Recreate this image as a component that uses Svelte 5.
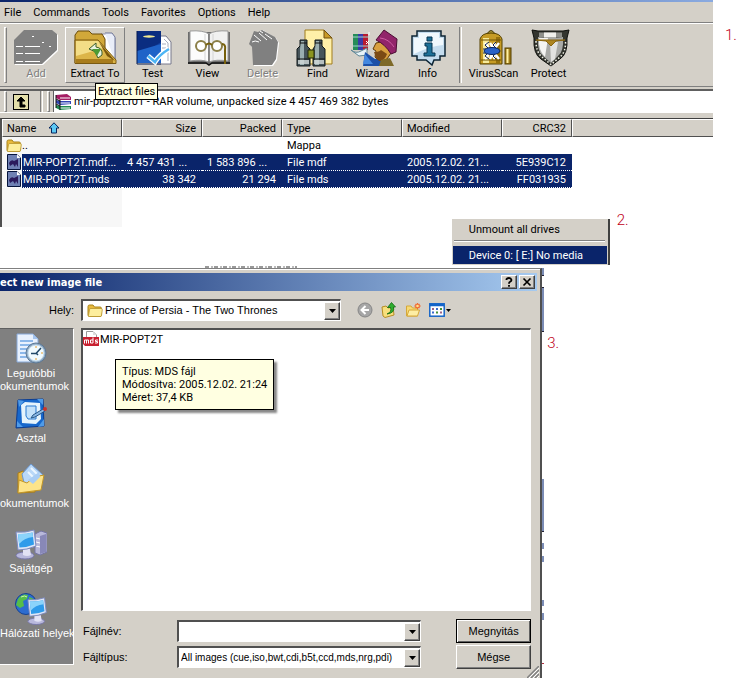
<script>
  const menus = ['File', 'Commands', 'Tools', 'Favorites', 'Options', 'Help'];

  const tools = [
    { id: 'add', label: 'Add', disabled: true },
    { id: 'extract', label: 'Extract To', hot: true },
    { id: 'test', label: 'Test' },
    { id: 'view', label: 'View' },
    { id: 'delete', label: 'Delete', disabled: true },
    { id: 'find', label: 'Find' },
    { id: 'wizard', label: 'Wizard' },
    { id: 'info', label: 'Info' },
    { id: 'virus', label: 'VirusScan', split: true },
    { id: 'protect', label: 'Protect' }
  ];

  const files = [
    { name: 'MIR-POPT2T.mdf...', size: '4 457 431 ...', packed: '1 583 896 ...', type: 'File mdf', modified: '2005.12.02. 21...', crc: '5E939C12' },
    { name: 'MIR-POPT2T.mds', size: '38 342', packed: '21 294', type: 'File mds', modified: '2005.12.02. 21...', crc: 'FF031935' }
  ];

  const places = [
    { id: 'recent', lines: ['Legutóbbi', 'okumentumok'] },
    { id: 'desktop', lines: ['Asztal'] },
    { id: 'documents', lines: ['okumentumok'] },
    { id: 'computer', lines: ['Sajátgép'] },
    { id: 'network', lines: ['Hálózati helyek'] }
  ];

  let archivePath = $state('mir-popt2t.r01 - RAR volume, unpacked size 4 457 469 382 bytes');
  let fileName = $state('');

  // Truncated numbers start at the left edge of their cell
  const truncated = (text) => text.endsWith('...');
</script>

{#snippet folderIcon()}
  <svg class="small-icon" viewBox="0 0 16 16" aria-hidden="true">
    <path d="M1 3.5Q1 2 2.500 2H6l1.500 2H13q1.500 0 1.500 1.500V12q0 1.500-1.500 1.500H2.500Q1 13.500 1 12z" fill="#e8b93c" stroke="#a8841c" />
    <path d="M2.500 6.500Q2.700 5.500 4 5.500H14q1.500 0 1.300 1.200L14.500 12.500q-.2 1-1.500 1H2.500q-1 0-1-1z" fill="#fdee9c" stroke="#b8942c" stroke-width=".8" />
  </svg>
{/snippet}

{#snippet arrow()}
  <svg class="arrow" viewBox="0 0 7 4" aria-hidden="true"><path d="M0 0H7L3.500 4z" /></svg>
{/snippet}

{#snippet monitor()}
  <ellipse cx="10" cy="27.500" rx="9" ry="3.500" fill="#b9b9dc" stroke="#7777aa" />
  <path d="M8 21h7l1 6q-4 2-8 0z" fill="#e2e2f4" />
  <path d="M1 4Q10 5 19 2L21 18Q12 22 3 22z" fill="#dfe6f6" stroke="#7d8ac0" />
  <path d="M3 6Q10 6.500 17.500 4.500L19 16.500Q12 19.500 4.500 19.500z" fill="#2f9bea" />
  <path d="M3 6Q10 6.500 17.500 4.500L18 9Q9 10 4 16z" fill="#8bd3fb" />
{/snippet}

<main>
  <section class="step">
    <div class="archiver">
      <nav class="menubar">
        {#each menus as menu}
          <button>{menu}</button>
        {/each}
      </nav>

      <div class="toolbar">
        <span class="grip"></span>
        {#each tools as tool}
          {#if tool.split}<span class="split"></span>{/if}
          <button class="tool" class:hot={tool.hot} disabled={tool.disabled}>
            <svg viewBox="0 0 44 36" aria-hidden="true">
              {#if tool.id === 'add'}
                <path d="M11 1H39L44 5V21L29 35H1V11z" fill="#fff" />
                <path d="M10 0H38L43 4V20L28 34H0V10z" fill="#808080" />
                <path d="M2 16.500h7M11 16.500h15M2 23.500h7M11 23.500h15M2 31.500h7M11 31.500h15M18 6.500h2M28 12.500h2M35 16.500h2" stroke="#fff" fill="none" />
              {:else if tool.id === 'extract'}
                <path d="M28 4H38L42 8V32H28z" fill="#fff" stroke="#8d8fa8" />
                <path d="M32 3h7l3 4v25" fill="#e9edf8" stroke="#6f7698" />
                <path d="M2 5L5 1H16L19 4H29L32 9V33H2z" fill="#d1a83a" stroke="#6a4c0c" />
                <path d="M2 10H25L43 30V33.500H2z" fill="#dcb548" stroke="#7a5a12" />
                <path d="M3 11H25L31 18L3 26z" fill="#f3dd86" />
                <path d="M3 29H40V33H3z" fill="#a87c1c" />
                <path d="M26 12L42 31L34 26z" fill="#7c580c" />
                <path d="M16 19L23 13V17Q30 18 29 25L25 28L22 22H23z" fill="#e9f4e0" stroke="#3c5c28" />
                <path d="M19 19H28L24 26z" fill="#4c9c34" />
              {:else if tool.id === 'test'}
                <path d="M28 6H35L40 12V34H26z" fill="#fff" stroke="#77788c" />
                <path d="M33 9l4 4v18M31 14h4M31 18h4" stroke="#a7adbe" fill="none" />
                <rect x="6" y="1" width="24" height="32" fill="#123f9c" />
                <path d="M6 1H30V12L6 27z" fill="#0a2d80" />
                <path d="M6 33V21L30 14V33z" fill="#1f63c8" />
                <path d="M6 1V34H30" stroke="#061a50" fill="none" />
                <ellipse cx="18" cy="6.500" rx="6" ry="1.200" fill="#f0e890" />
                <path d="M17 26L24 32Q28 25 38 19" stroke="#fff" stroke-width="5" fill="none" />
                <path d="M17 26L24 32Q28 25 38 19" stroke="#4cb4f4" stroke-width="2.500" fill="none" />
              {:else if tool.id === 'view'}
                <path d="M2 2V34H44V2" fill="#6d6d6d" />
                <path d="M4 1Q17 0 23 4V32Q16 29 4 31z" fill="#fcfcfc" stroke="#999" />
                <path d="M42 1Q29 0 23 4V32Q30 29 42 31z" fill="#f1f1f1" stroke="#999" />
                <path d="M23 4V33" stroke="#555" />
                <path d="M19 4v26M27 4v26" stroke="#d4d4d4" />
                <path d="M2 33H20L23 35L26 33H44" stroke="#111" stroke-width="1.500" fill="none" />
                <circle cx="15" cy="16" r="5" fill="#fff" stroke="#8b7f48" stroke-width="2" />
                <circle cx="31" cy="16" r="5" fill="#fff" stroke="#8b7f48" stroke-width="2" />
                <path d="M20 15Q23 12 26 15M36 14Q40 14 39 20V34" stroke="#77600c" stroke-width="2" fill="none" />
              {:else if tool.id === 'delete'}
                <path d="M14 2L18 3L22 0L35 8L38 13L36 30L32 36H13L12 18L9 15z" fill="#fff" />
                <path d="M13 1L17 2L21 0L34 7L37 12L35 29L31 35H12L11 17L8 14z" fill="#808080" />
                <path d="M13 5L20 11M18 3L26 10M24 4L31 9M11 12Q14 10 18 12M19 1l3 2" stroke="#fff" fill="none" />
              {:else if tool.id === 'find'}
                <path d="M9 0H28L36 8V34H9z" fill="#fff0a8" stroke="#a07c1c" />
                <path d="M28 0V8H36z" fill="#c89a28" stroke="#705010" />
                <path d="M4 10h7v6l3 3v17H1V19l3-3zM19 10h7v6l3 3v17H17V19l2-3z" fill="#46545a" stroke="#11181b" />
                <path d="M5 11h3v24H4V19zM20 11h3v24h-4V19z" fill="#9aaeb0" />
                <path d="M4 13h7M19 13h7M1 29h13M17 29h12" stroke="#111" />
                <path d="M2 30h11v4H2zM18 30h10v4H18z" fill="#d2d9d9" opacity=".8" />
                <path d="M12 20h6v8h-6z" fill="#8a9420" stroke="#232806" />
              {:else if tool.id === 'wizard'}
                <rect x="2" y="4" width="5" height="16" fill="#268c58" />
                <rect x="7" y="4" width="5" height="16" fill="#3a3aa8" />
                <rect x="12" y="4" width="5" height="16" fill="#b81c30" />
                <path d="M2 7h15M2 16h15" stroke="#9fd3d0" />
                <path d="M0 20Q5 24 10 21L16 18V25L8 26z" fill="#e8f4f8" stroke="#5c8494" />
                <path d="M14 22L24 29L31 27L41 32V36H12z" fill="#1c50a8" />
                <path d="M14 24L22 34H12z" fill="#4488e0" />
                <path d="M25 13L22 19L25 21L24 27Q29 33 36 29L42 20L35 11z" fill="#d8a040" stroke="#5d3808" />
                <path d="M23 22Q28 22 30 20L36 24Q34 30 29 31Q25 29 24 25z" fill="#7b4a14" />
                <path d="M25 10L33 0L46 9L45 22L40 24Q34 14 25 10z" fill="#92246a" stroke="#4b0d34" />
                <path d="M29 8Q38 9 43 17" stroke="#cc5ca2" fill="none" />
                <path d="M30 30L39 28L43 36H28z" fill="#7e6a28" />
                <path d="M15 11l3 3M18 11l-3 3M18 2v3" stroke="#fff" />
              {:else if tool.id === 'info'}
                <path d="M11 1H35V6H39V26H34V30H28L26 35L20 30H11V26H6V6H11z" fill="#c4dcee" stroke="#0c2434" stroke-width="1.500" />
                <path d="M13 3H33V8H37V15Q24 16 8 24V8H13z" fill="#f0f8fd" />
                <path d="M21 7h5v4h-5zM19 13h7v10h3v3H18v-3h3v-7h-2z" fill="#1c7098" stroke="#063450" />
              {:else if tool.id === 'virus'}
                <path d="M15 4Q19-3 23 4z" fill="#b5a03b" stroke="#403400" />
                <path d="M8 34V9Q10 3 19 3T30 9V34z" fill="#c69b24" stroke="#544000" />
                <path d="M11 8h6v25h-6z" fill="#f7eb9a" />
                <path d="M24 7h4v26h-4z" fill="#95700b" />
                <path d="M9 30h20M9 10h20" stroke="#6c5104" />
                <path d="M13 13l4 5M18 13l3 5M23 13l-3 5M27 13l-4 5M13 29l4-5M18 29l2-5M23 29l-3-5M27 29l-4-5" fill="none" stroke="#fff" stroke-width="2.500" />
                <path d="M17 12l-4 3 4 4M24 12l-3 3 4 4M17 29l-4-3 4-4M24 29l-3-3 4-4M11 19h3M11 23h3" fill="none" stroke="#102458" />
                <ellipse cx="20" cy="21" rx="8" ry="3.500" fill="#2a62c8" stroke="#0b245c" />
                <rect x="33" y="18" width="6" height="16" fill="#a07c1a" stroke="#544000" />
                <path d="M35.500 19v14" stroke="#fff1a2" stroke-width="2" />
              {:else}
                <path d="M5 0L11 1H36L42 0L40 8Q41 24 33 29L24 36L14 29Q6 24 7 8z" fill="#33352f" stroke="#0f100d" />
                <path d="M11 7Q24 9 36 7Q37 22 31 26L24 33L16 26Q10 22 11 7z" fill="#a9aaa7" />
                <path d="M12 8H21L18 27Q11 20 12 9z" fill="#f4f4f2" />
                <path d="M23 12H31L28 29L24 32z" fill="#e2e2e0" />
                <path d="M9 10H38L29 11L24 16L19 11z" fill="#ad8520" stroke="#8a6610" />
                <path d="M12 2.500h23v5H12z" fill="#8e8f8a" />
                <path d="M17 2.500h12v5H17z" fill="#f0f0ec" />
                <path d="M9 11Q9 22 15 27L24 34.500L33 27Q39 22 38.500 11" fill="none" stroke="#f4f4e8" stroke-dasharray="1.500 2" stroke-width="1.500" />
              {/if}
            </svg>
            <span>{tool.label}</span>
            {#if tool.hot}<span class="tip" role="tooltip">Extract files</span>{/if}
          </button>
        {/each}
      </div>

      <div class="address">
        <span class="grip"></span>
        <button class="up" aria-label="Up one level">
          <svg viewBox="0 0 16 16" aria-hidden="true">
            <rect x=".5" y=".5" width="15" height="15" fill="#e4dfaa" stroke="#000" />
            <path d="M8 3L12 7H9V11H12V13H7V7H4z" stroke="#000" />
          </svg>
        </button>
        <span class="split"></span>
        <span class="grip"></span>
        <label class="path">
          <svg class="small-icon" viewBox="0 0 16 16" aria-hidden="true">
            <path d="M1 1L12 0L16 3V6L5 6L1 4z" fill="#a51d64" />
            <path d="M1 6L5 7H16V10L5 11L1 9z" fill="#3144b4" />
            <path d="M1 11L5 12H16V15L5 16L1 14z" fill="#1e8a50" />
            <path d="M5 4H15M5 9H15M5 14H15" stroke="#fff" />
            <path d="M1 1V14M1 5L5 7M1 10L5 12M5 6V16" stroke="#111" fill="none" />
          </svg>
          <input type="text" aria-label="Archive" bind:value={archivePath} />
        </label>
      </div>

      <div class="listing">
        <table>
          <colgroup>
            <col class="c-name" /><col class="c-size" /><col class="c-size" /><col class="c-type" /><col class="c-mod" /><col class="c-crc" /><col />
          </colgroup>
          <thead>
            <tr>
              <th>
                <span class="sorted">
                  Name
                  <svg viewBox="0 0 12 12" aria-hidden="true"><path d="M6 .8L11 6H8.500V11H3.500V6H1z" fill="#5cc8f4" stroke="#06245c" /></svg>
                </span>
              </th>
              <th class="num">Size</th>
              <th class="num">Packed</th>
              <th>Type</th>
              <th>Modified</th>
              <th class="num">CRC32</th>
              <th></th>
            </tr>
          </thead>
          <tbody>
            <tr>
              <td class="name"><span class="entry">{@render folderIcon()}<span>..</span></span></td>
              <td></td>
              <td></td>
              <td>Mappa</td>
              <td></td>
              <td></td>
              <td></td>
            </tr>
            {#each files as file}
              <tr class="selected">
                <td class="name">
                  <span class="entry">
                    <svg class="small-icon" viewBox="0 0 16 16" aria-hidden="true">
                      <path d="M1.500 .5H11L14.500 4V15.500H1.500z" fill="#6f81b4" stroke="#06143c" />
                      <path d="M11 .5V4H14.500z" fill="#fff" />
                      <path d="M3 9Q5 5 8 7L12 5V13L10 10L9 13L7 10L4 12z" fill="#2a1a5c" />
                    </svg>
                    <span>{file.name}</span>
                  </span>
                </td>
                <td class:num={!truncated(file.size)}>{file.size}</td>
                <td class:num={!truncated(file.packed)}>{file.packed}</td>
                <td>{file.type}</td>
                <td>{file.modified}</td>
                <td class="num">{file.crc}</td>
                <td class="rest"></td>
              </tr>
            {/each}
          </tbody>
        </table>
        <div class="name-column"></div>
      </div>
    </div>
    <span class="note first">1.</span>
  </section>

  <section class="step tray">
    <div class="context">
      <button>Unmount all drives</button>
      <hr />
      <button class="active">Device 0: [ E:] No media</button>
    </div>
    <span class="note">2.</span>
  </section>

  <div class="remnant"></div>

  <section class="step">
    <div class="dialog">
      <header>
        <h1>ect new image file</h1>
        <button class="caption" aria-label="Help">
          <svg viewBox="0 0 10 10" aria-hidden="true"><path d="M2.500 3V2.200Q3 1 5 1T7.500 3Q7.500 4 6 4.800Q5 5.300 5 6.800M5 8v1.800" fill="none" stroke="#000" stroke-width="1.800" /></svg>
        </button>
        <button class="caption" aria-label="Close">
          <svg viewBox="0 0 10 10" aria-hidden="true"><path d="M1.500 1.500L8.500 8.500M8.500 1.500L1.500 8.500" stroke="#000" stroke-width="1.700" /></svg>
        </button>
      </header>

      <div class="lookin">
        <label for="folder">Hely:</label>
        <div class="combo">
          {@render folderIcon()}
          <select id="folder">
            <option>Prince of Persia - The Two Thrones</option>
          </select>
          <span class="drop">{@render arrow()}</span>
        </div>
        <div class="nav">
          <button aria-label="Back">
            <svg viewBox="0 0 16 16" aria-hidden="true">
              <circle cx="8" cy="8" r="7" fill="#a6a6a6" stroke="#868686" />
              <path d="M8.500 4L4.500 8L8.500 12M5 8H12" stroke="#fff" stroke-width="2" fill="none" />
            </svg>
          </button>
          <button aria-label="Up one level">
            <svg viewBox="0 0 16 16" aria-hidden="true">
              <path d="M1 5L5 4L7 6L12 5L13 13L4 15.500L2 14z" fill="#f7df7c" stroke="#b58c24" />
              <path d="M6 12Q11 10 9.500 5.500H6.500L10.500 .5L14.500 5H12.500Q14 11 6 12z" fill="#2fae2f" stroke="#126812" stroke-width=".8" />
            </svg>
          </button>
          <button aria-label="New folder">
            <svg viewBox="0 0 16 16" aria-hidden="true">
              <path d="M1.500 4H6L7.500 6H12.500V14H1.500z" fill="#f7da74" stroke="#d6a838" />
              <path d="M2 14L4 8H14.500L12.500 14z" fill="#fdeea4" stroke="#d6a838" />
              <path d="M12.500 1V7M9.500 4H15.500M10.500 2L14.500 6M14.500 2L10.500 6" stroke="#f06830" stroke-width="1.300" />
              <circle cx="12.500" cy="4" r="1.300" fill="#ffe08c" />
            </svg>
          </button>
          <button class="views" aria-label="Views">
            <svg viewBox="0 0 16 16" aria-hidden="true">
              <rect x=".8" y="1.800" width="14.400" height="12.400" fill="#fff" stroke="#1464c8" stroke-width="1.500" />
              <path d="M1 3H15" stroke="#1464c8" stroke-width="2.500" />
              <path d="M3 7h2M11 10.500h2" stroke="#9c6488" stroke-width="2" />
              <path d="M7 7h2M3 10.500h2" stroke="#3c6ccc" stroke-width="2" />
              <path d="M11 7h2M7 10.500h2" stroke="#449038" stroke-width="2" />
            </svg>
            {@render arrow()}
          </button>
        </div>
      </div>

      <div class="content">
        <nav class="places">
          {#each places as place}
            <button class="place">
              <svg viewBox="0 0 32 32" aria-hidden="true">
                {#if place.id === 'recent'}
                  <path d="M2 1H18L23 6V29H2z" fill="#e8f1fe" stroke="#86a8d8" />
                  <path d="M18 1V6H23z" fill="#a4c4ee" />
                  <path d="M5 8h13M5 12h13M5 16h8M5 20h6M5 24h8" stroke="#8cb8ea" stroke-width="2" />
                  <circle cx="21" cy="20" r="10" fill="#8da9c4" stroke="#5c7894" />
                  <circle cx="21" cy="20" r="8" fill="#f1fbff" stroke="#c6dcec" />
                  <path d="M26 15L21 20.500H16M21 20L23 22" stroke="#204868" stroke-width="1.500" fill="none" />
                  <path d="M21 13v2M28 20h-2M21 27v-2" stroke="#e8a030" />
                {:else if place.id === 'desktop'}
                  <path d="M3 2L28 1L29 28L1 30z" fill="#1768cc" stroke="#0b3c92" />
                  <path d="M6 7L10 4L25 5L26 21L21 26L7 25z" fill="#e6f4fc" />
                  <path d="M3 2L9 3L4 9zM22 1h6v6zM23 29l6-1v-7zM2 23l6 6H2z" fill="#4f9be8" />
                  <path d="M11 8H21V21H13L11 18z" fill="#c4e2fa" stroke="#2a7ad0" />
                  <path d="M18 17L28 11L30 13L20 19L16 20z" fill="#8bb8e4" stroke="#265688" />
                  <circle cx="30" cy="11" r="2" fill="#cc3428" />
                {:else if place.id === 'documents'}
                  <path d="M3 10L8 8L13 11L20 9V29L3 30z" fill="#e8b944" stroke="#a87c18" />
                  <path d="M7 11L16 1L28 12L20 25L10 24z" fill="#b9d8f8" stroke="#6c98d0" />
                  <path d="M16 5l8 8M13 9l8 8" stroke="#ecf6ff" stroke-width="2" />
                  <path d="M3 30L4 17L12 20L19 14L29 12L26 27z" fill="#fde48a" stroke="#c29628" />
                  <path d="M13 17L24 9L25 14L18 21z" fill="#a9cdf4" />
                {:else if place.id === 'computer'}
                  <path d="M20 6L26 3L32 5V24L25 27L20 25z" fill="#b8b8da" stroke="#7474a4" />
                  <path d="M25 8V26L31 24V6z" fill="#8888b8" />
                  <path d="M21 10l4 1M21 14l4 1M21 18l4 1" stroke="#fff" />
                  {@render monitor()}
                {:else}
                  <circle cx="11" cy="11" r="10.500" fill="#2c6cd0" stroke="#17428f" />
                  <path d="M3 6Q7 0 13 2L12 6L8 8L9 13L5 15L1 12zM14 4Q19 5 20 9L14 12z" fill="#55bd49" />
                  <path d="M6 4Q10 2 12 4" stroke="#cdf0b8" fill="none" />
                  <g transform="translate(12 3) scale(.92)">{@render monitor()}</g>
                {/if}
              </svg>
              {#each place.lines as line}
                <span class:wide={line.length > 10}>{line}</span>
              {/each}
            </button>
          {/each}
        </nav>

        <div class="files">
          <button class="file">
            <svg class="small-icon" viewBox="0 0 16 16" aria-hidden="true">
              <path d="M3.500 .5H10L13.500 4V12H3.500z" fill="#fff" stroke="#999" />
              <path d="M10 .5V4H13.500z" fill="#ddd" />
              <path d="M0 6H16V15H2L0 13z" fill="#c82030" />
              <path d="M1.500 12.500V9H5.500V12.500M3.500 9V12.500M10 6.500V12H7.500V9H10M15 9H12.500V10.500H14.500V12H12" fill="none" stroke="#fff" />
            </svg>
            <span>MIR-POPT2T</span>
          </button>
          <div class="filetip" role="tooltip">
            <div>Típus: MDS fájl</div>
            <div>Módosítva: 2005.12.02. 21:24</div>
            <div>Méret: 37,4 KB</div>
          </div>
        </div>

        <div class="fields">
          <label for="filename">Fájlnév:</label>
          <div class="combo">
            <input id="filename" type="text" bind:value={fileName} />
            <button class="drop" aria-label="Previous names">{@render arrow()}</button>
          </div>
          <button class="push default">Megnyitás</button>
          <label for="filetype">Fájltípus:</label>
          <div class="combo">
            <select id="filetype">
              <option>All images (cue,iso,bwt,cdi,b5t,ccd,mds,nrg,pdi)</option>
            </select>
            <span class="drop">{@render arrow()}</span>
          </div>
          <button class="push">Mégse</button>
          <svg class="resize" viewBox="0 0 12 12" aria-hidden="true">
            <path d="M0 12L12 0M4 12L12 4M8 12L12 8" stroke="#808080" stroke-width="1.500" />
            <path d="M2 12L12 2M6 12L12 6M10 12L12 10" stroke="#fff" />
          </svg>
        </div>
      </div>
    </div>
    <div class="behind"></div>
    <span class="note third">3.</span>
  </section>
</main>

<style>
  :global(body) {
    margin: 0;
    background: #fff;
  }

  main {
    --face: #d4d0c8;
    --navy: #0a246a;
    font: 11px/13px Roboto, 'Liberation Sans', sans-serif;
    color: #000;
    overflow: hidden;
  }

  button,
  input,
  select {
    font: inherit;
    color: inherit;
    margin: 0;
    padding: 0;
    border: 0;
    border-radius: 0;
    background: none;
    outline: none;
  }

  select {
    appearance: none;
  }

  svg {
    display: block;
    flex: none;
  }

  .step {
    display: flex;
    align-items: flex-start;
  }

  .note {
    color: #c00020;
    font-size: 15px;
    line-height: 16px;
    font-weight: 300;
    margin: -1px 0 0 7px;
  }

  .note.first {
    width: 28px;
    margin: 27px 0 0 12px;
  }

  .note.third {
    margin: 67px 0 0 3px;
  }

  .small-icon {
    width: 16px;
    height: 16px;
  }

  /* Archiver window */
  .archiver {
    flex: 1;
    min-width: 0;
    background: linear-gradient(90deg, #0a246a, #8aaae0) top / 100% 2px no-repeat var(--face);
    padding-top: 2px;
  }

  .menubar {
    display: flex;
    gap: 12px;
    height: 20px;
    padding-left: 4px;
    border-bottom: 1px solid #808080;
  }

  .toolbar {
    display: flex;
    align-items: stretch;
    height: 56px;
    padding: 3px 0 3px 4px;
    border-top: 1px solid #fff;
    border-bottom: 1px solid #808080;
  }

  .grip {
    width: 1px;
    border: 1px solid #fff;
    border-right-color: #808080;
    border-bottom-color: #808080;
  }

  .split {
    width: 1px;
    margin: 0 4px;
    border-left: 1px solid #808080;
    border-right: 1px solid #fff;
  }

  .tool {
    position: relative;
    display: flex;
    flex-direction: column;
    align-items: center;
    width: 55px;
    padding-top: 2px;
    border: 1px solid transparent;
    box-sizing: border-box;
  }

  .tool.hot {
    width: 60px;
    border-color: #fff #808080 #808080 #fff;
  }

  .tool svg {
    width: 44px;
    height: 36px;
    overflow: visible;
  }

  .tool span {
    margin-top: 1px;
  }

  .tool:first-of-type {
    width: 58px;
  }

  .tool:disabled {
    color: #808080;
    text-shadow: 1px 1px #fff;
  }

  .tool .tip {
    position: absolute;
    z-index: 2;
    top: 55px;
    left: 29px;
    margin: 0;
    padding: 1px 2px;
    border: 1px solid #000;
    background: #ffffe1;
    white-space: nowrap;
  }

  .address {
    display: flex;
    align-items: stretch;
    height: 21px;
    margin-top: 2px;
    padding-left: 4px;
    border-top: 2px solid #606060;
    border-bottom: 1px solid #fff;
  }

  .up {
    padding: 0 7px 0 6px;
  }

  .up svg {
    width: 16px;
    height: 16px;
  }

  .path {
    flex: 1;
    display: flex;
    align-items: center;
    gap: 3px;
    margin-left: 3px;
    padding-left: 1px;
    border-left: 1px solid #606060;
    background: #fff;
  }

  .path input {
    flex: 1;
    min-width: 0;
  }

  .listing {
    display: flex;
    flex-direction: column;
    height: 108px;
    margin-top: 2px;
    border-top: 1px solid #404040;
    border-left: 2px solid #505050;
    background: #fff;
  }

  .address + .listing {
    margin-top: 5px;
  }

  table {
    width: 100%;
    table-layout: fixed;
    border-collapse: separate;
    border-spacing: 0;
  }

  .c-name,
  .c-type {
    width: 120px;
  }

  .c-size {
    width: 80px;
  }

  .c-mod {
    width: 100px;
  }

  .c-crc {
    width: 70px;
  }

  th {
    height: 16px;
    padding: 0 5px 0 4px;
    border: 1px solid #fff;
    border-right-color: #505050;
    border-bottom-color: #505050;
    background: var(--face);
    font-weight: 400;
    text-align: left;
  }

  th:last-child {
    border-right: 0;
  }

  td {
    height: 17px;
    padding: 0 6px 0 5px;
    white-space: nowrap;
    overflow: hidden;
    box-sizing: border-box;
  }

  .num {
    text-align: right;
  }

  .sorted {
    display: flex;
    align-items: center;
    gap: 12px;
  }

  .sorted svg {
    width: 12px;
    height: 12px;
  }

  td.name {
    padding: 0;
    background: #f7f7f7;
  }

  .entry {
    display: flex;
    align-items: center;
    height: 17px;
    padding-left: 4px;
    box-sizing: border-box;
  }

  .selected td {
    height: 17px;
    background: var(--navy);
    color: #fff;
    border-bottom: 1px dotted #fff;
  }

  .selected td.name {
    background: linear-gradient(90deg, #f7f7f7 20px, var(--navy) 20px);
  }

  .selected .entry {
    height: 16px;
  }

  .selected .entry span {
    padding-left: 1px;
  }

  .selected td.rest {
    background: #fff;
  }

  .name-column {
    flex: 1;
    width: 120px;
    background: #f7f7f7;
  }

  /* Tray menu */
  .tray {
    margin: -14px 0 0 60%;
  }

  .context {
    display: flex;
    flex-direction: column;
    width: 154px;
    margin-top: 6px;
    padding: 1px;
    border-right: 2px solid #404040;
    background: var(--face);
  }

  .context button {
    height: 18px;
    padding-left: 16px;
    text-align: left;
  }

  .context hr {
    width: 98%;
    margin: 2px auto 4px;
    border: 0;
    border-top: 1px solid #808080;
    border-bottom: 1px solid #fff;
  }

  .context .active {
    background: var(--navy);
    color: #fff;
  }

  .remnant {
    width: 92px;
    height: 2px;
    margin: 1px 0 0 205px;
    background: repeating-linear-gradient(90deg, #999 0 4px, #fff 4px 6px, #bbb 6px 8px, #fff 8px 9px);
  }

  /* File dialog */
  .dialog {
    width: 72%;
    box-sizing: border-box;
    padding: 2px 0 0;
    border-top: 1px solid #808080;
    border-right: 2px solid #505050;
    background: var(--face);
    box-shadow: inset 0 1px #fff;
    font-family: 'Liberation Sans', sans-serif;
  }

  .dialog header {
    display: flex;
    align-items: center;
    gap: 2px;
    height: 18px;
    margin: 2px 3px 0 0;
    padding-right: 2px;
    background: linear-gradient(90deg, var(--navy), #a6caf0);
  }

  .dialog h1 {
    flex: 1;
    margin: 0;
    font: bold 11px/13px 'DejaVu Sans Condensed', sans-serif;
    color: #fff;
  }

  .caption {
    display: grid;
    place-items: center;
    width: 16px;
    height: 14px;
  }

  .caption svg {
    width: 10px;
    height: 10px;
  }

  .caption,
  .drop,
  .push {
    box-sizing: border-box;
    border: 1px solid #fff;
    border-right-color: #404040;
    border-bottom-color: #404040;
    background: var(--face);
    box-shadow: inset -1px -1px #808080;
  }

  .lookin {
    display: flex;
    align-items: center;
    height: 22px;
    margin-top: 8px;
  }

  .lookin label {
    width: 74px;
    margin-right: 7px;
    text-align: right;
  }

  .lookin .combo {
    flex: 0 1 260px;
    padding-left: 4px;
  }

  .lookin select {
    padding-left: 4px;
  }

  .combo {
    display: flex;
    align-items: center;
    min-width: 0;
    height: 22px;
    box-sizing: border-box;
    border: 2px solid #505050;
    border-right: 1px solid #fff;
    border-bottom: 1px solid #fff;
    background: #fff;
  }

  .combo select,
  .combo input {
    flex: 1;
    min-width: 0;
    padding-left: 2px;
  }

  .combo #filetype {
    font-size: 10px;
  }

  .drop {
    display: grid;
    place-items: center;
    width: 16px;
    height: 18px;
    pointer-events: none;
  }

  .arrow {
    width: 7px;
    height: 4px;
  }

  .nav {
    display: flex;
    gap: 8px;
    margin-left: 16px;
  }

  .nav button svg:first-child {
    width: 16px;
    height: 16px;
  }

  .nav .views {
    display: flex;
    align-items: center;
    gap: 1px;
  }

  .views .arrow {
    width: 5px;
    height: 3px;
  }

  .content {
    display: grid;
    grid-template-columns: 74px 1fr;
    grid-template-rows: 283px auto;
    column-gap: 7px;
    margin-top: 7px;
  }

  .places {
    grid-row: 1 / 3;
    margin-bottom: 13px;
    border-top: 1px solid #606060;
    border-right: 1px solid #fff;
    border-bottom: 1px solid #fff;
    background: #808080;
    overflow: hidden;
  }

  .place {
    display: flex;
    flex-direction: column;
    align-items: center;
    width: 62px;
    height: 65px;
    padding-top: 4px;
    color: #fff;
    white-space: nowrap;
  }

  .place svg {
    width: 32px;
    height: 32px;
    margin-bottom: 2px;
  }

  .place .wide {
    align-self: flex-start;
  }

  .files {
    position: relative;
    margin-right: 9px;
    border: 2px solid #505050;
    border-right: 1px solid #fff;
    border-bottom: 1px solid #fff;
    background: #fff;
    font-family: Roboto, sans-serif;
  }

  .file {
    display: flex;
    align-items: center;
    gap: 1px;
    height: 18px;
  }

  .filetip {
    position: absolute;
    top: 29px;
    left: 32px;
    padding: 5px 6px;
    border: 1px solid #000;
    background: #ffffe1;
    box-shadow: 3px 3px 2px #888;
  }

  .fields {
    position: relative;
    display: grid;
    grid-template-columns: 94px minmax(0, 244px) 1fr;
    grid-auto-rows: 24px;
    row-gap: 2px;
    align-items: center;
    padding: 8px 9px 9px 2px;
  }

  .fields .push {
    justify-self: end;
    width: 75px;
    height: 24px;
  }

  .push.default {
    border: 1px solid #000;
    box-shadow: inset 1px 1px #fff, inset -1px -1px #606060;
  }

  .resize {
    position: absolute;
    right: 1px;
    bottom: 0;
    width: 12px;
    height: 12px;
  }

  /* Sliver of the window underneath the dialog */
  .behind {
    align-self: stretch;
    width: 2px;
    background: linear-gradient(
      #7b8cb5 0 7px, #223 7px 8px, #fff 8px 19px, #223 19px 20px, #7b8cb5 20px 63px, #223 63px 64px,
      #fff 64px 211px, #7b8cb5 211px 263px, #223 263px 264px, #fff 264px 275px, #7b8cb5 275px 281px,
      #fff 281px 288px, #7b8cb5 288px 294px, #fff 294px 332px, #7b8cb5 332px 338px, #fff 338px 345px,
      #7b8cb5 345px 352px, #fff 352px 395px, #b03040 395px 396px, #fff 396px
    );
  }
</style>
